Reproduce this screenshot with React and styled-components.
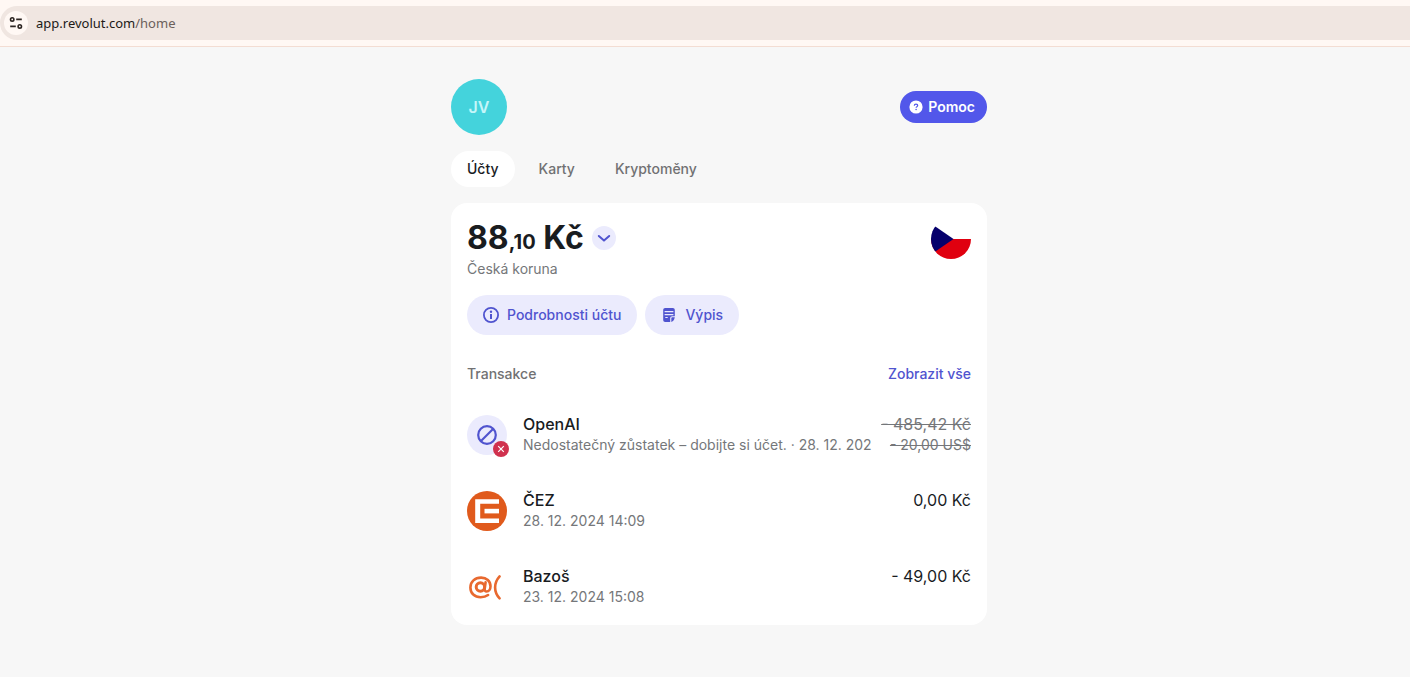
import { useState } from "react";
import styled, { createGlobalStyle, css } from "styled-components";

const GlobalStyle = createGlobalStyle`
  * {
    box-sizing: border-box;
  }

  body {
    margin: 0;
    background-color: #f7f7f7;
    color: #191c1f;
    font-family: "Inter", "Liberation Sans", sans-serif;
    font-size: 14px;
    line-height: 20px;
  }

  button {
    border: none;
    font: inherit;
    cursor: pointer;
  }
`;

const BrowserBar = styled.header`
  padding: 6px 0;
  background-color: #fff8f4;
  border-bottom: 1px solid #f3ddd3;
`;

const AddressField = styled.div`
  display: flex;
  align-items: center;
  gap: 8px;
  height: 34px;
  padding-left: 4px;
  border-radius: 17px 0 0 17px;
  background-color: #f0e6e1;
  font-family: "Noto Sans", "Open Sans", sans-serif;
  font-size: 13px;
  color: #211a17;
`;

const SiteInfoButton = styled.button`
  display: flex;
  align-items: center;
  justify-content: center;
  width: 24px;
  height: 24px;
  padding: 0;
  border-radius: 50%;
  background-color: #fff8f4;
`;

const UrlPath = styled.span`
  color: #6b605b;
`;

const Page = styled.main`
  display: flex;
  flex-direction: column;
  gap: 16px;
  width: 100%;
  max-width: 564px;
  margin: 0 auto;
  padding: 32px 0 48px 28px;
`;

const TopRow = styled.div`
  display: flex;
  align-items: center;
  justify-content: space-between;
`;

const Avatar = styled.button`
  width: 56px;
  height: 56px;
  padding: 0;
  border-radius: 50%;
  background-color: #44d3dc;
  color: #c5f6f9;
  font-size: 16px;
  font-weight: 600;
`;

const HelpButton = styled.button`
  display: flex;
  align-items: center;
  gap: 4px;
  height: 32px;
  padding: 0 12px 0 8px;
  border-radius: 16px;
  background-color: #5257ea;
  color: #ffffff;
  font-weight: 600;
`;

const Tabs = styled.nav`
  display: flex;
  gap: 8px;
`;

const Tab = styled.button`
  height: 36px;
  padding: 0 16px;
  border-radius: 18px;
  background-color: transparent;
  color: #717173;
  font-weight: 500;

  ${({ $active }) =>
    $active &&
    css`
      background-color: #ffffff;
      color: #191c1f;
    `}
`;

const Card = styled.section`
  padding: 16px 16px 17px;
  border-radius: 16px;
  background-color: #ffffff;
`;

const CardHeader = styled.div`
  display: flex;
  align-items: flex-start;
  justify-content: space-between;
`;

const BalanceRow = styled.div`
  display: flex;
  align-items: center;
  gap: 8px;
  height: 40px;
  padding-bottom: 2px;
`;

const Balance = styled.h1`
  margin: 0;
  font-size: 32px;
  line-height: 38px;
  font-weight: 700;
`;

const Cents = styled.span`
  font-size: 20px;
  line-height: 20px;
`;

const RoundButton = styled.button`
  display: flex;
  align-items: center;
  justify-content: center;
  width: 24px;
  height: 24px;
  padding: 0;
  border-radius: 50%;
  background-color: #ebebfd;
`;

const Muted = styled.p`
  margin: 0;
  color: #75777a;
`;

const Actions = styled.div`
  display: flex;
  flex-wrap: wrap;
  gap: 8px;
  margin-top: 16px;
`;

const ActionButton = styled.button`
  display: flex;
  align-items: center;
  gap: 8px;
  height: 40px;
  padding: 0 16px;
  border-radius: 20px;
  background-color: #ebebfd;
  color: #5054cf;
  font-weight: 500;
`;

const ListHeader = styled.div`
  display: flex;
  justify-content: space-between;
  margin-top: 29px;
  font-weight: 500;
`;

const ListTitle = styled.h2`
  margin: 0;
  color: #717173;
  font-size: 14px;
  font-weight: 500;
`;

const ShowAll = styled.a`
  color: #5054cf;
  text-decoration: none;
`;

const TransactionList = styled.ul`
  display: flex;
  flex-direction: column;
  gap: 34px;
  margin: 30px 0 0;
  padding: 0;
  list-style: none;
`;

const Transaction = styled.li`
  display: flex;
  align-items: center;
  gap: 8px;
`;

const TransactionIcon = styled.div`
  position: relative;
  flex: none;
  width: 40px;
  height: 40px;
  margin-right: 8px;

  svg {
    display: block;
  }
`;

const FailedBadge = styled.span`
  position: absolute;
  right: -2px;
  bottom: -2px;
`;

const Details = styled.div`
  flex: 1;
  min-width: 0;
`;

const Amounts = styled.div`
  flex: none;
  align-self: flex-start;
  text-align: right;
  text-decoration: ${({ $failed }) => ($failed ? "line-through" : "none")};
  color: ${({ $failed }) => ($failed ? "#75777a" : "#191c1f")};
`;

const Primary = styled.div`
  font-size: 16px;
  line-height: 20px;
  font-weight: ${({ $strong }) => ($strong ? 500 : 400)};
`;

const Secondary = styled.div`
  overflow: hidden;
  color: #75777a;
  line-height: 22px;
  white-space: nowrap;
`;

function TuneIcon() {
  return (
    <svg width="14" height="14" viewBox="0 0 14 14" fill="none" stroke="#2c2522" strokeWidth="1.6">
      <circle cx="3.2" cy="3.4" r="1.7" />
      <path d="M7.2 3.4h5.6M1.2 10.4h5.6" />
      <circle cx="10.8" cy="10.4" r="1.7" />
    </svg>
  );
}

function HelpIcon() {
  return (
    <svg width="16" height="16" viewBox="0 0 16 16" fill="none">
      <circle cx="8" cy="8" r="6.6" fill="#fff" />
      <path
        d="M6.3 6.7c0-.9.7-1.5 1.7-1.5s1.7.6 1.7 1.4c0 1.1-1.6 1.1-1.6 2.2"
        stroke="#5257ea"
        strokeWidth="1.2"
      />
      <circle cx="8.1" cy="10.5" r=".8" fill="#5257ea" />
    </svg>
  );
}

function ChevronIcon() {
  return (
    <svg width="16" height="16" viewBox="0 0 16 16" fill="none" stroke="#5054cf" strokeWidth="2">
      <path d="M2.8 6 8 10.6 13.2 6" strokeLinecap="round" strokeLinejoin="round" />
    </svg>
  );
}

function InfoIcon() {
  return (
    <svg width="16" height="16" viewBox="0 0 16 16" fill="none" stroke="#5054cf">
      <circle cx="8" cy="8" r="7.1" strokeWidth="1.8" />
      <path d="M8 7v5" strokeWidth="2" />
      <circle cx="8" cy="4.7" r="1.2" fill="#5054cf" stroke="none" />
    </svg>
  );
}

function StatementIcon() {
  return (
    <svg width="16" height="16" viewBox="0 0 16 16" fill="none">
      <path
        d="M4.2 1h7.6c1.2 0 2 .8 2 2v6.2h-2.6c-1.2 0-2 .8-2 2V15h-5c-1.2 0-2-.8-2-2V3c0-1.2.8-2 2-2Z"
        fill="#5054cf"
      />
      <path d="M10.3 15v-3.5c0-.7.5-1.2 1.2-1.2h2.3c-.3 2.3-1.500 4-3.5 4.7Z" fill="#5054cf" />
      <path d="M3.6 4.6h8.800M3.600 7.600h8.800M4.300 10.500h2.400" stroke="#ebebfd" strokeWidth="1.1" />
    </svg>
  );
}

function CzechFlag() {
  return (
    <svg width="40" height="40" viewBox="0 0 40 40" role="img" aria-label="CZK">
      <clipPath id="flag-circle">
        <circle cx="20" cy="20" r="20" />
      </clipPath>
      <g clipPath="url(#flag-circle)">
        <path d="M0 0h40v20H0z" fill="#fff" />
        <path d="M0 20h40v20H0z" fill="#e0000f" />
        <path d="M0 4.5 22.5 20 0 35.5z" fill="#06006c" />
      </g>
    </svg>
  );
}

function BlockedIcon() {
  return (
    <svg width="40" height="40" viewBox="0 0 40 40" fill="none" stroke="#5054cf" strokeWidth="2.2">
      <circle cx="20" cy="20" r="20" fill="#ebebfd" stroke="none" />
      <circle cx="20" cy="20" r="8.8" />
      <path d="m14 26 12-12" />
    </svg>
  );
}

function CrossBadge() {
  return (
    <svg width="16" height="16" viewBox="0 0 16 16">
      <circle cx="8" cy="8" r="8" fill="#d0314e" />
      <path d="m5.2 5.2 5.6 5.6m0-5.6-5.6 5.6" stroke="#fff" strokeWidth="1.2" />
    </svg>
  );
}

function CezLogo() {
  return (
    <svg width="40" height="40" viewBox="0 0 40 40">
      <circle cx="20" cy="20" r="20" fill="#e05a1c" />
      <path d="M8.2 8.2H32v4.6H13.2v14.6H32V32H8.2z" fill="#fff" />
      <path d="M17.500 17.800H32v4.600H17.500z" fill="#fff" />
    </svg>
  );
}

function BazosLogo() {
  return (
    <svg width="40" height="40" viewBox="0 0 40 40" fill="none" stroke="#e8692f" strokeLinecap="round">
      <circle cx="13.4" cy="20" r="4.2" strokeWidth="3" />
      <path
        d="M18.600 15.200l-.9 6.300c-.3 2 .5 3 1.900 3 2.300 0 3.900-2.400 3.900-5.200 0-5.200-4-8.700-9.400-8.700C7.900 10.600 3.400 14.800 3.400 20.400c0 5.900 4.200 9.800 10.200 9.800 3 0 5.600-.8 7.500-2.200"
        strokeWidth="2.600"
      />
      <path d="M32.600 9.400c-6 6.600-6 15.600 0 22" strokeWidth="2.600" />
    </svg>
  );
}

const tabs = ["Účty", "Karty", "Kryptoměny"];

const transactions = [
  {
    name: "OpenAI",
    note: "Nedostatečný zůstatek – dobijte si účet. · 28. 12. 202",
    amount: "- 485,42 Kč",
    original: "- 20,00 US$",
    failed: true,
    icon: <BlockedIcon />,
  },
  { name: "ČEZ", note: "28. 12. 2024 14:09", amount: "0,00 Kč", icon: <CezLogo /> },
  { name: "Bazoš", note: "23. 12. 2024 15:08", amount: "- 49,00 Kč", icon: <BazosLogo /> },
];

export default function App() {
  const [activeTab, setActiveTab] = useState("Účty");

  return (
    <>
      <GlobalStyle />
      <BrowserBar>
        <AddressField>
          <SiteInfoButton aria-label="Informace o webu">
            <TuneIcon />
          </SiteInfoButton>
          <span>
            app.revolut.com<UrlPath>/home</UrlPath>
          </span>
        </AddressField>
      </BrowserBar>

      <Page>
        <TopRow>
          <Avatar>JV</Avatar>
          <HelpButton>
            <HelpIcon />
            Pomoc
          </HelpButton>
        </TopRow>

        <Tabs>
          {tabs.map((tab) => (
            <Tab key={tab} $active={tab === activeTab} onClick={() => setActiveTab(tab)}>
              {tab}
            </Tab>
          ))}
        </Tabs>

        <Card>
          <CardHeader>
            <div>
              <BalanceRow>
                <Balance>
                  88<Cents>,10</Cents> Kč
                </Balance>
                <RoundButton aria-label="Změnit účet">
                  <ChevronIcon />
                </RoundButton>
              </BalanceRow>
              <Muted>Česká koruna</Muted>
            </div>
            <CzechFlag />
          </CardHeader>

          <Actions>
            <ActionButton>
              <InfoIcon />
              Podrobnosti účtu
            </ActionButton>
            <ActionButton>
              <StatementIcon />
              Výpis
            </ActionButton>
          </Actions>

          <ListHeader>
            <ListTitle>Transakce</ListTitle>
            <ShowAll href="#transakce">Zobrazit vše</ShowAll>
          </ListHeader>

          <TransactionList id="transakce">
            {transactions.map((item) => (
              <Transaction key={item.name}>
                <TransactionIcon>
                  {item.icon}
                  {item.failed && (
                    <FailedBadge>
                      <CrossBadge />
                    </FailedBadge>
                  )}
                </TransactionIcon>
                <Details>
                  <Primary $strong>{item.name}</Primary>
                  <Secondary>{item.note}</Secondary>
                </Details>
                <Amounts $failed={item.failed}>
                  <Primary>{item.amount}</Primary>
                  {item.original && <Secondary>{item.original}</Secondary>}
                </Amounts>
              </Transaction>
            ))}
          </TransactionList>
        </Card>
      </Page>
    </>
  );
}
